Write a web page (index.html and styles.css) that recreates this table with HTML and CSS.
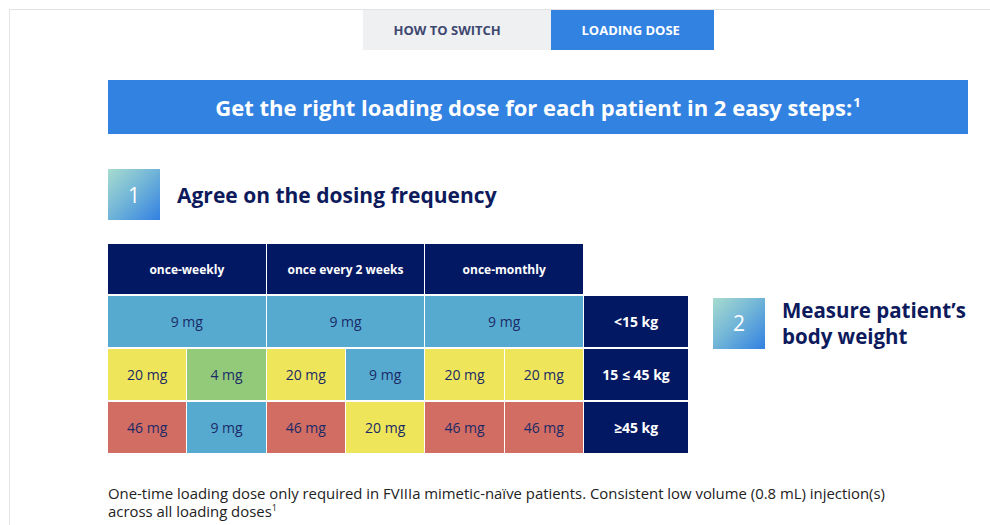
FILE: index.html
```html
<!DOCTYPE html>
<html lang="en">
<head>
<meta charset="utf-8">
<title>Loading dose</title>
<link rel="stylesheet" href="styles.css">
</head>
<body>
<div class="frame">
  <div class="content">
    <nav class="tabs">
      <div class="tab tab-first">HOW TO SWITCH</div>
      <div class="tab tab-active">LOADING DOSE</div>
    </nav>
    <div class="banner">Get the right loading dose for each patient in 2 easy steps:<sup>1</sup></div>
    <div class="step step-one">
      <div class="step-num">1</div>
      <h2 class="step-title">Agree on the dosing frequency</h2>
    </div>
    <div class="dose-area">
      <div class="dose-grid">
        <div class="cell head span2">once-weekly</div>
        <div class="cell head span2">once every 2 weeks</div>
        <div class="cell head span2">once-monthly</div>
        <div class="cell empty"></div>

        <div class="cell blue span2">9 mg</div>
        <div class="cell blue span2">9 mg</div>
        <div class="cell blue span2">9 mg</div>
        <div class="cell weight">&lt;15 kg</div>

        <div class="cell yellow">20 mg</div>
        <div class="cell green">4 mg</div>
        <div class="cell yellow">20 mg</div>
        <div class="cell blue">9 mg</div>
        <div class="cell yellow">20 mg</div>
        <div class="cell yellow">20 mg</div>
        <div class="cell weight">15 ≤ 45 kg</div>

        <div class="cell red">46 mg</div>
        <div class="cell blue">9 mg</div>
        <div class="cell red">46 mg</div>
        <div class="cell yellow">20 mg</div>
        <div class="cell red">46 mg</div>
        <div class="cell red">46 mg</div>
        <div class="cell weight">≥45 kg</div>
      </div>
      <div class="step step-two">
        <div class="step-num">2</div>
        <h2 class="step-title step-title-two">Measure patient’s<br>body weight</h2>
      </div>
    </div>
    <p class="note">One-time loading dose only required in FVIIIa mimetic-naïve patients. Consistent low volume (0.8 mL) injection(s) across all loading doses<sup>1</sup></p>
  </div>
</div>
</body>
</html>
```

FILE: styles.css
```css
* { box-sizing: border-box; }
html, body { margin: 0; padding: 0; background: #ffffff; }
body {
  font-family: "Open Sans", "Noto Sans", "Liberation Sans", sans-serif;
  color: #222222;
  overflow: hidden;
}
.frame {
  margin: 9px 0 0 9px;
  border-top: 1px solid #e3e3e3;
  border-left: 1px solid #e3e3e3;
  height: 520px;
}
.content {
  width: 958px;
  padding-left: 98px;
}
.tabs {
  display: flex;
  justify-content: center;
  height: 40px;
}
.tab {
  display: flex;
  align-items: center;
  padding: 0 31px;
  font-size: 13px;
  font-weight: 700;
  color: #3e4770;
  background: #eff0f2;
}
.tab-first { width: 188px; }
.tab-active {
  width: 163px;
  background: #3282e2;
  color: #ffffff;
}
.banner {
  margin-top: 30px;
  height: 54px;
  line-height: 54px;
  background: #3282e2;
  color: #ffffff;
  font-size: 22px;
  font-weight: 700;
  text-align: center;
}
.banner sup {
  font-size: 13px;
  line-height: 0;
  vertical-align: baseline;
  position: relative;
  top: -9px;
  margin-left: 1px;
}
.step {
  display: flex;
  align-items: center;
}
.step-one { margin-top: 35px; }
.step-num {
  width: 52px;
  height: 51px;
  flex: none;
  background: linear-gradient(135deg, #a8dccf 0%, #6fb3d8 50%, #3280e2 100%);
  color: #ffffff;
  font-size: 21px;
  display: flex;
  align-items: center;
  justify-content: center;
}
.step-title {
  margin: 0 0 0 17px;
  font-size: 21px;
  font-weight: 700;
  color: #0d1a5c;
}
.step-title-two {
  font-size: 20.5px;
  line-height: 26px;
}
.dose-area {
  display: flex;
  align-items: flex-start;
  margin-top: 24px;
}
.dose-grid {
  width: 580px;
  display: grid;
  grid-template-columns: repeat(6, 1fr) 104px;
  grid-template-rows: 50px 51px 51px 51px;
  column-gap: 1px;
  row-gap: 2px;
}
.cell {
  display: flex;
  align-items: center;
  justify-content: center;
  font-size: 14px;
  color: #1b2a66;
}
.span2 { grid-column: span 2; }
.head {
  background: #031862;
  color: #ffffff;
  font-size: 12px;
  font-weight: 700;
}
.empty { background: transparent; }
.weight {
  background: #031862;
  color: #ffffff;
  font-weight: 700;
}
.blue { background: #56aad0; }
.yellow { background: #eee55b; }
.green { background: #93ca7a; }
.red { background: #d16d63; }
.step-two {
  margin-left: 25px;
  margin-top: 53px;
}
.note {
  margin: 31px 0 0 0;
  width: 800px;
  font-size: 14.9px;
  line-height: 18px;
  color: #222222;
}
.note sup {
  font-size: 9px;
  line-height: 0;
  vertical-align: baseline;
  position: relative;
  top: -6px;
}
```
